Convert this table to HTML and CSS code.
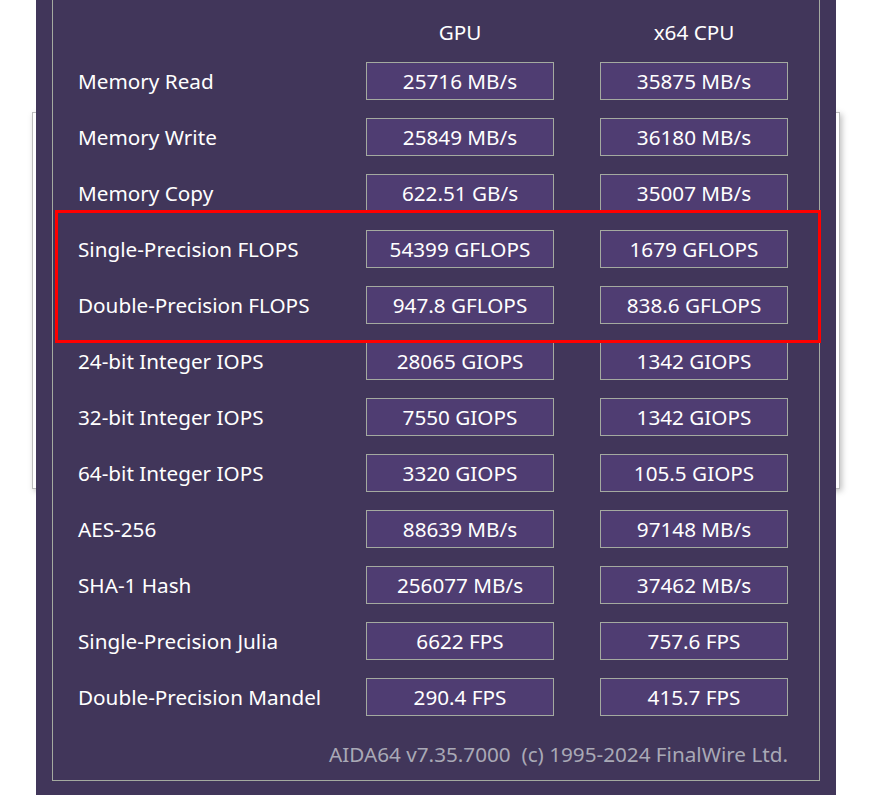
FILE: index.html
```html
<!DOCTYPE html>
<html>
<head>
<meta charset="utf-8">
<link rel="stylesheet" href="styles.css">
</head>
<body>
<div class="backwin"></div>
<div class="panel">
  <div class="frame">
    <div class="row head">
      <div class="label"></div>
      <div class="colhead">GPU</div>
      <div class="colhead">x64 CPU</div>
    </div>
    <div class="row"><div class="label">Memory Read</div><div class="val">25716 MB/s</div><div class="val">35875 MB/s</div></div>
    <div class="row"><div class="label">Memory Write</div><div class="val">25849 MB/s</div><div class="val">36180 MB/s</div></div>
    <div class="row"><div class="label">Memory Copy</div><div class="val">622.51 GB/s</div><div class="val">35007 MB/s</div></div>
    <div class="row"><div class="label">Single-Precision FLOPS</div><div class="val">54399 GFLOPS</div><div class="val">1679 GFLOPS</div></div>
    <div class="row"><div class="label">Double-Precision FLOPS</div><div class="val">947.8 GFLOPS</div><div class="val">838.6 GFLOPS</div></div>
    <div class="row"><div class="label">24-bit Integer IOPS</div><div class="val">28065 GIOPS</div><div class="val">1342 GIOPS</div></div>
    <div class="row"><div class="label">32-bit Integer IOPS</div><div class="val">7550 GIOPS</div><div class="val">1342 GIOPS</div></div>
    <div class="row"><div class="label">64-bit Integer IOPS</div><div class="val">3320 GIOPS</div><div class="val">105.5 GIOPS</div></div>
    <div class="row"><div class="label">AES-256</div><div class="val">88639 MB/s</div><div class="val">97148 MB/s</div></div>
    <div class="row"><div class="label">SHA-1 Hash</div><div class="val">256077 MB/s</div><div class="val">37462 MB/s</div></div>
    <div class="row"><div class="label">Single-Precision Julia</div><div class="val">6622 FPS</div><div class="val">757.6 FPS</div></div>
    <div class="row"><div class="label">Double-Precision Mandel</div><div class="val">290.4 FPS</div><div class="val">415.7 FPS</div></div>
    <div class="footer">AIDA64 v7.35.7000&nbsp; (c) 1995-2024 FinalWire Ltd.</div>
  </div>
</div>
<div class="highlight"></div>
</body>
</html>
```
FILE: styles.css
```css
html, body {
  margin: 0;
  padding: 0;
  background: #ffffff;
  overflow: hidden;
}
body {
  width: 881px;
  height: 795px;
  position: relative;
  font-family: "Noto Sans", "Open Sans", sans-serif;
}
.backwin {
  position: absolute;
  left: 32px;
  top: 112px;
  width: 806px;
  height: 375px;
  border: 1px solid #bdbdbd;
  background: #ffffff;
  box-shadow: 2px 2px 6px rgba(0,0,0,0.25);
}
.panel {
  position: relative;
  margin-left: 36px;
  width: 800px;
  height: 795px;
  background: #41365a;
  box-sizing: border-box;
  padding-left: 16px;
}
.frame {
  width: 768px;
  height: 781px;
  box-sizing: border-box;
  border: 1px solid #a4aaa0;
  border-top: none;
  padding-left: 25px;
  display: flex;
  flex-direction: column;
  gap: 18px;
}
.row {
  display: grid;
  grid-template-columns: 288px 188px 234px;
  height: 38px;
  align-items: center;
}
.row > :nth-child(3) {
  justify-self: end;
  width: 188px;
}
.row.head {
  height: 44px;
  align-items: start;
}
.row.head .colhead {
  margin-top: 13px;
  line-height: 38px;
}
.label {
  color: #ffffff;
  font-size: 20.7px;
  line-height: 38px;
  white-space: nowrap;
}
.colhead {
  color: #ffffff;
  font-size: 20.7px;
  text-align: center;
}
.val {
  height: 38px;
  box-sizing: border-box;
  border: 1px solid #a4aaa0;
  background: #4f3d72;
  color: #ffffff;
  font-size: 20.7px;
  line-height: 37px;
  text-align: center;
  white-space: nowrap;
}
.footer {
  margin-top: 1px;
  width: 710px;
  text-align: right;
  color: #a9a9b6;
  font-size: 20.7px;
  line-height: 38px;
  white-space: pre;
}
.highlight {
  position: absolute;
  left: 55px;
  top: 210px;
  width: 760px;
  height: 127px;
  border: 3px solid #ff0000;
}
```
